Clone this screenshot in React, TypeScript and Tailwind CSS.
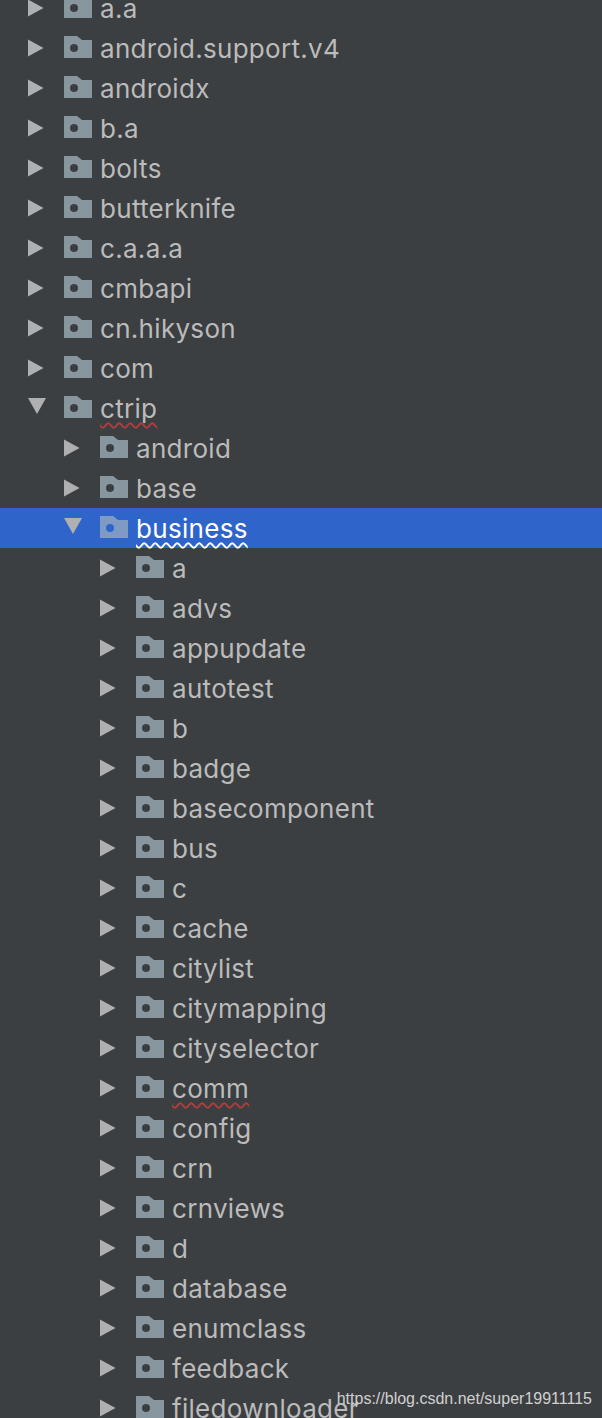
import React from 'react';

type Node = { name: string; level: 0 | 1 | 2; open?: boolean; selected?: boolean; typo?: boolean };

const nodes: Node[] = [
  { name: 'a.a', level: 0 },
  { name: 'android.support.v4', level: 0 },
  { name: 'androidx', level: 0 },
  { name: 'b.a', level: 0 },
  { name: 'bolts', level: 0 },
  { name: 'butterknife', level: 0 },
  { name: 'c.a.a.a', level: 0 },
  { name: 'cmbapi', level: 0 },
  { name: 'cn.hikyson', level: 0 },
  { name: 'com', level: 0 },
  { name: 'ctrip', level: 0, open: true, typo: true },
  { name: 'android', level: 1 },
  { name: 'base', level: 1 },
  { name: 'business', level: 1, open: true, selected: true, typo: true },
  { name: 'a', level: 2 },
  { name: 'advs', level: 2 },
  { name: 'appupdate', level: 2 },
  { name: 'autotest', level: 2 },
  { name: 'b', level: 2 },
  { name: 'badge', level: 2 },
  { name: 'basecomponent', level: 2 },
  { name: 'bus', level: 2 },
  { name: 'c', level: 2 },
  { name: 'cache', level: 2 },
  { name: 'citylist', level: 2 },
  { name: 'citymapping', level: 2 },
  { name: 'cityselector', level: 2 },
  { name: 'comm', level: 2, typo: true },
  { name: 'config', level: 2 },
  { name: 'crn', level: 2 },
  { name: 'crnviews', level: 2 },
  { name: 'd', level: 2 },
  { name: 'database', level: 2 },
  { name: 'enumclass', level: 2 },
  { name: 'feedback', level: 2 },
  { name: 'filedownloader', level: 2 },
];

const indent = { 0: 'pl-[28px]', 1: 'pl-[64px]', 2: 'pl-[100px]' };

const Arrow: React.FC<{ open?: boolean }> = ({ open }) => (
  <svg width="18" height="18" viewBox="0 0 18 18" className="shrink-0">
    {open ? <path d="M0 0h18L9 16z" fill="#aeb0b2" /> : <path d="M0 0.5l15.5 8.5L0 17.5z" fill="#aeb0b2" />}
  </svg>
);

const Folder: React.FC<{ selected?: boolean }> = ({ selected }) => (
  <svg width="28" height="22" viewBox="0 0 28 22" className="mb-[2px] shrink-0">
    <path d="M0 0h13l5 4h10v18H0z" fill={selected ? '#7f9bc4' : '#88969f'} />
    <circle cx="10" cy="12" r="4" fill={selected ? '#2f65ca' : '#3c3f41'} />
  </svg>
);

const Row: React.FC<{ node: Node }> = ({ node }) => (
  <div className={`flex h-[40px] items-center ${indent[node.level]} ${node.selected ? 'bg-[#2f65ca]' : ''}`}>
    <div className={`w-[36px] shrink-0 ${node.open ? 'mb-[2px]' : ''}`}>
      <Arrow open={node.open} />
    </div>
    <Folder selected={node.selected} />
    <span
      className={`ml-[8px] mt-[2px] whitespace-nowrap text-[26px] leading-[40px] tracking-[0.3px] ${
        node.selected ? 'text-white' : 'text-[#bbbbbb]'
      } ${
        node.typo
          ? `underline decoration-wavy decoration-[1.5px] underline-offset-[4px] [text-decoration-skip-ink:none] ${
              node.selected ? 'decoration-white' : 'decoration-[#b23b3b]'
            }`
          : ''
      }`}
    >
      {node.name}
    </span>
  </div>
);

export default function App() {
  return (
    <div className="relative h-[1418px] w-[602px] overflow-hidden bg-[#3c3f41] font-['Inter',sans-serif]">
      <div className="-mt-[12px]">
        {nodes.map((node) => (
          <Row key={`${node.level}-${node.name}`} node={node} />
        ))}
      </div>
      <div className="absolute bottom-[9px] right-[10px] whitespace-nowrap font-['Liberation_Sans',sans-serif] text-[16px] leading-[20px] text-[#d0d0d0]">
        https://blog.csdn.net/super19911115
      </div>
    </div>
  );
}
